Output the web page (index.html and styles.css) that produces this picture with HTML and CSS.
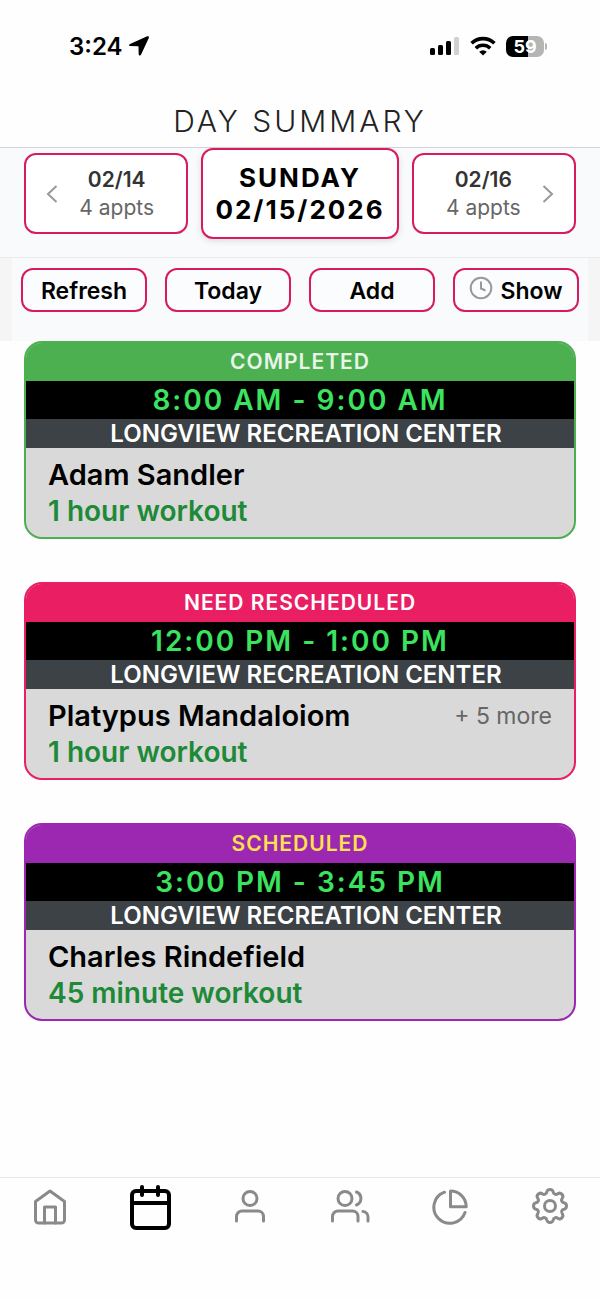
FILE: index.html
```
<!DOCTYPE html>
<html lang="en">
<head>
    <meta charset="UTF-8">
    <meta name="viewport" content="width=device-width, initial-scale=1.0">
    <title>Day Summary</title>
    <link rel="stylesheet" href="styles.css">
</head>
<body>
    <div class="app">
        <header class="header">
            <!-- Status Bar -->
            <div class="status-bar">
                <div class="clock">
                    <span>3:24</span>
                    <svg width="20" height="20" viewBox="0 0 20 20" fill="#000"><path d="M18.2.3 1.1 7.900c-1.500.7-1.300 2.100.2 2.200l7.700.2c.4 0 .5.1.5.5l.2 7.400c.1 1.600 1.700 1.900 2.400.4L19.800 1.900C20.300.7 19.400-.2 18.200.3Z"/></svg>
                </div>
                <div class="indicators">
                    <svg width="30" height="20" viewBox="0 0 30 20">
                        <rect x="0" y="12" width="5" height="7" rx="1.500"/>
                        <rect x="8" y="9" width="5" height="10" rx="1.500"/>
                        <rect x="16" y="5" width="5" height="14" rx="1.500"/>
                        <rect x="24" y="1" width="5" height="18" rx="1.500" fill="#d0d0d0"/>
                    </svg>
                    <svg width="26" height="20" viewBox="0 0 26 20" fill="none" stroke="#000" stroke-width="3.600">
                        <path d="M1.600 7.300a16.300 16.300 0 0 1 22.800 0"/>
                        <path d="M5.800 12.200a10.300 10.300 0 0 1 14.400 0"/>
                        <path d="M13 19.500 9.200 15.700a5.400 5.400 0 0 1 7.600 0Z" fill="#000" stroke="none"/>
                    </svg>
                    <div class="battery"><span class="battery-level">59</span></div>
                </div>
            </div>
            <h1>DAY SUMMARY</h1>
        </header>

        <!-- Day Navigation -->
        <nav class="day-nav">
            <button class="day-button">
                <svg class="chevron" width="12" height="20" viewBox="0 0 12 20"><path d="M10.500 2 2 10l8.500 8"/></svg>
                <span class="day-info">
                    <span class="day-date">02/14</span>
                    <span class="day-count">4 appts</span>
                </span>
            </button>
            <button class="day-button current">
                <span>SUNDAY</span>
                <span>02/15/2026</span>
            </button>
            <button class="day-button">
                <span class="day-info">
                    <span class="day-date">02/16</span>
                    <span class="day-count">4 appts</span>
                </span>
                <svg class="chevron" width="12" height="20" viewBox="0 0 12 20"><path d="M1.500 2 10 10l-8.500 8"/></svg>
            </button>
        </nav>

        <!-- Actions -->
        <div class="toolbar">
            <div class="toolbar-inner">
                <button class="action">Refresh</button>
                <button class="action">Today</button>
                <button class="action">Add</button>
                <button class="action">
                    <svg class="clock-icon" width="24" height="24" viewBox="0 0 24 24"><circle cx="12" cy="12" r="10.300"/><path d="M12 5.500V12.500l4.500 2"/></svg>
                    Show
                </button>
            </div>
        </div>

        <!-- Appointments -->
        <main class="appointments">
            <article class="card completed">
                <div class="card-status">COMPLETED</div>
                <div class="card-time">8:00 AM - 9:00 AM</div>
                <div class="card-place">LONGVIEW RECREATION CENTER</div>
                <div class="card-body">
                    <div class="client-row">
                        <h2>Adam Sandler</h2>
                    </div>
                    <p class="service">1 hour workout</p>
                </div>
            </article>

            <article class="card reschedule">
                <div class="card-status">NEED RESCHEDULED</div>
                <div class="card-time">12:00 PM - 1:00 PM</div>
                <div class="card-place">LONGVIEW RECREATION CENTER</div>
                <div class="card-body">
                    <div class="client-row">
                        <h2>Platypus Mandaloiom</h2>
                        <span class="more">+ 5 more</span>
                    </div>
                    <p class="service">1 hour workout</p>
                </div>
            </article>

            <article class="card scheduled">
                <div class="card-status">SCHEDULED</div>
                <div class="card-time">3:00 PM - 3:45 PM</div>
                <div class="card-place">LONGVIEW RECREATION CENTER</div>
                <div class="card-body">
                    <div class="client-row">
                        <h2>Charles Rindefield</h2>
                    </div>
                    <p class="service">45 minute workout</p>
                </div>
            </article>
        </main>

        <!-- Tab Bar -->
        <nav class="tab-bar">
            <a href="#home" aria-label="Home">
                <svg width="40" height="42" viewBox="0 0 40 42"><path d="M5.500 17.500 20 7l14.500 10.500V36a3 3 0 0 1-3 3h-23a3 3 0 0 1-3-3Z"/><path d="M14.500 39V23h11v16"/></svg>
            </a>
            <a href="#calendar" class="active" aria-label="Calendar">
                <svg width="44" height="46" viewBox="0 0 44 46"><rect x="4" y="7" width="37" height="37" rx="4"/><path d="M4 19h37M14 3v8M30 3v8"/></svg>
            </a>
            <a href="#client" aria-label="Client">
                <svg width="40" height="42" viewBox="0 0 40 42"><circle cx="20" cy="14.500" r="7"/><path d="M6.500 37v-4.500a5.500 5.500 0 0 1 5.500-5.500h16a5.500 5.500 0 0 1 5.500 5.500V37"/></svg>
            </a>
            <a href="#groups" aria-label="Groups">
                <svg width="40" height="42" viewBox="0 0 40 42"><circle cx="15" cy="14.500" r="7"/><path d="M2.500 37v-4.500A5.500 5.500 0 0 1 8 27h14.500a5.500 5.500 0 0 1 5.500 5.500V37M26.500 8a7 7 0 0 1 0 13M33 27.500a5.500 5.500 0 0 1 5 5.500v4"/></svg>
            </a>
            <a href="#reports" aria-label="Reports">
                <svg width="40" height="42" viewBox="0 0 40 42"><path d="M20.500 7v15.700H36.200A15.700 15.700 0 0 0 20.500 7Z"/><path d="M14.500 8.200A16 16 0 1 0 35 28.500"/></svg>
            </a>
            <a href="#settings" aria-label="Settings">
                <svg width="40" height="42" viewBox="0 0 40 42"><circle cx="20" cy="22" r="5.500"/><path d="M16.800 8A3.300 3.300 0 0 1 23.200 8A2.700 2.700 0 0 0 27.600 9.800A3.300 3.300 0 0 1 32.200 14.400A2.700 2.700 0 0 0 34 18.800A3.300 3.300 0 0 1 34 25.200A2.700 2.700 0 0 0 32.200 29.600A3.300 3.300 0 0 1 27.600 34.200A2.700 2.700 0 0 0 23.200 36A3.300 3.300 0 0 1 16.800 36A2.700 2.700 0 0 0 12.400 34.200A3.300 3.300 0 0 1 7.800 29.600A2.700 2.700 0 0 0 6 25.200A3.300 3.300 0 0 1 6 18.800A2.700 2.700 0 0 0 7.800 14.400A3.300 3.300 0 0 1 12.400 9.800A2.700 2.700 0 0 0 16.800 8Z"/></svg>
            </a>
        </nav>
    </div>
</body>
</html>
```
FILE: styles.css
```
* {
    box-sizing: border-box;
}

body {
    margin: 0;
    font-family: Inter, "Liberation Sans", sans-serif;
    background-color: #fefefe;
    color: #000;
}

button {
    font-family: inherit;
    color: inherit;
    cursor: pointer;
}

svg {
    display: block;
    flex-shrink: 0;
}

.app {
    display: flex;
    flex-direction: column;
    min-height: 100vh;
}

/* Header */
.header {
    padding-top: 32px;
    border-bottom: 1px solid #d4d4d4;
}

.status-bar {
    display: flex;
    justify-content: space-between;
    align-items: center;
    height: 28px;
    padding: 0 56px 0 69px;
}

.clock {
    display: flex;
    align-items: center;
    gap: 7px;
    font-size: 24px;
    font-weight: 600;
}

.indicators {
    display: flex;
    align-items: center;
    gap: 10px;
}

.battery {
    position: relative;
    width: 38px;
    height: 21px;
    border-radius: 7px;
    background: linear-gradient(90deg, #000 59%, #b5b5b5 59%);
    color: #fff;
    font-size: 18px;
    font-weight: 700;
    line-height: 21px;
    text-align: center;
}

.battery::after {
    content: "";
    position: absolute;
    top: 7px;
    right: -3px;
    width: 2px;
    height: 7px;
    border-radius: 0 2px 2px 0;
    background-color: #b5b5b5;
}

h1 {
    margin: 43px 0 8px;
    color: #222;
    font-size: 30px;
    font-weight: 300;
    line-height: 36px;
    letter-spacing: 3px;
    text-align: center;
}

/* Day navigation */
.day-nav {
    display: grid;
    grid-template-columns: 5fr 6fr 5fr;
    align-items: center;
    gap: 13px;
    padding: 0 24px 18px;
    background-color: #f8fafc;
    border-bottom: 1px solid #e9ebed;
}

.day-button {
    display: flex;
    justify-content: space-between;
    align-items: center;
    gap: 9px;
    height: 81px;
    padding: 0 20px;
    border: 2px solid #d81b60;
    border-radius: 12px;
    background-color: #fff;
}

.day-info {
    display: flex;
    flex: 1;
    flex-direction: column;
    align-items: center;
    line-height: 28px;
}

.day-date {
    color: #333;
    font-size: 21px;
    font-weight: 600;
}

.day-count {
    color: #666;
    font-size: 21px;
}

.chevron {
    fill: none;
    stroke: #999;
    stroke-width: 2;
}

.day-button.current {
    flex-direction: column;
    justify-content: center;
    gap: 0;
    height: 91px;
    padding: 0;
    box-shadow: 0 2px 6px rgba(0, 0, 0, 0.12);
    font-size: 26px;
    font-weight: 700;
    line-height: 32px;
    letter-spacing: 2px;
}

/* Toolbar */
.toolbar {
    padding: 0 12px;
    background-color: #f5f5f5;
}

.toolbar-inner {
    display: grid;
    grid-template-columns: repeat(4, 1fr);
    gap: 18px;
    padding: 10px 9px 29px;
    background-color: #f8fafc;
}

.action {
    display: flex;
    justify-content: center;
    align-items: center;
    gap: 7px;
    height: 44px;
    padding: 1px 0 0;
    border: 2px solid #d81b60;
    border-radius: 12px;
    background-color: #fbfcfd;
    font-size: 23px;
    font-weight: 600;
}

.clock-icon {
    margin-bottom: 6px;
    fill: none;
    stroke: #999;
    stroke-width: 2;
}

/* Appointment cards */
.appointments {
    display: flex;
    flex: 1;
    flex-direction: column;
    gap: 43px;
    padding: 0 24px 43px;
}

.card {
    overflow: hidden;
    border: 2px solid;
    border-radius: 18px;
    background-color: #d9d9d9;
    text-align: center;
}

.card-status {
    color: #fff;
    font-size: 21px;
    font-weight: 600;
    line-height: 38px;
    letter-spacing: 1px;
}

.card-time {
    background-color: #000;
    color: #3be35f;
    font-size: 28px;
    font-weight: 600;
    line-height: 38px;
    letter-spacing: 2px;
}

.card-place {
    padding-left: 12px;
    background-color: #3c4245;
    color: #fff;
    font-size: 24px;
    font-weight: 600;
    line-height: 29px;
}

.card-body {
    padding: 9px 22px 8px;
    text-align: left;
}

.client-row {
    display: flex;
    justify-content: space-between;
    align-items: center;
}

h2 {
    margin: 0;
    color: #000;
    font-size: 29px;
    font-weight: 600;
    line-height: 36px;
}

.more {
    color: #666;
    font-size: 23px;
}

.service {
    margin: 0;
    color: #1e8a38;
    font-size: 28px;
    font-weight: 600;
    line-height: 36px;
}

.completed {
    border-color: #4caf50;
}

.completed .card-status {
    background-color: #4caf50;
    color: #e8f5e9;
}

.reschedule {
    border-color: #e91e63;
}

.reschedule .card-status {
    background-color: #e91e63;
}

.scheduled {
    border-color: #9c27b0;
}

.scheduled .card-status {
    background-color: #9c27b0;
    color: #ffe14d;
}

/* Tab bar */
.tab-bar {
    display: grid;
    grid-template-columns: repeat(6, 1fr);
    justify-items: center;
    align-items: start;
    padding: 6px 0 69px;
    border-top: 1px solid #e6e6e6;
}

.tab-bar svg {
    fill: none;
    stroke: #8a8a8a;
    stroke-width: 3;
    stroke-linecap: round;
    stroke-linejoin: round;
}

.tab-bar .active svg {
    stroke: #000;
    stroke-width: 4;
}
```
